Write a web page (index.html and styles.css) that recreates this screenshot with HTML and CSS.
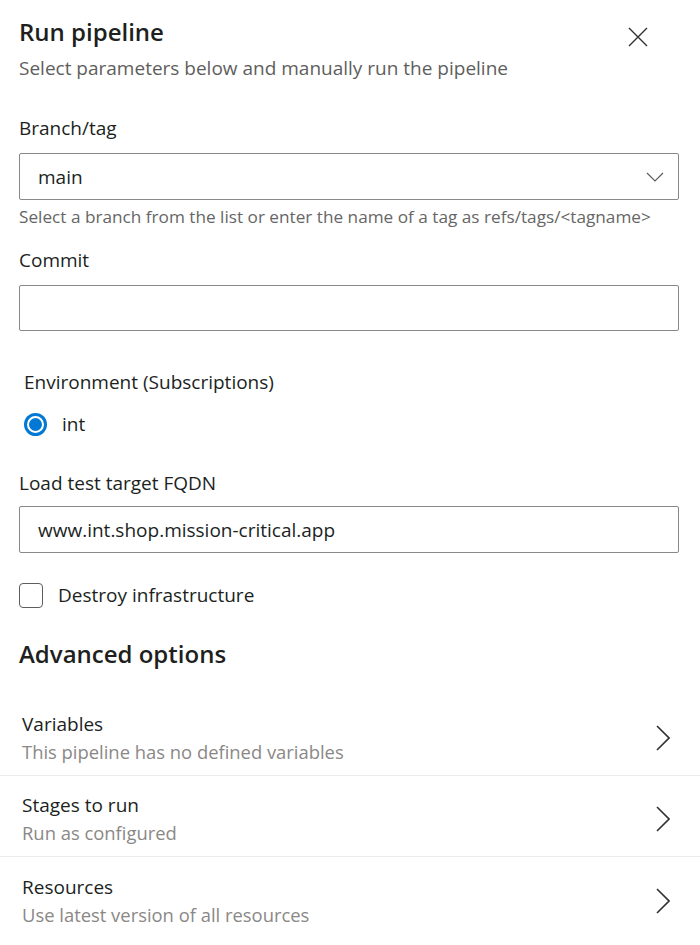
FILE: index.html
```html
<!DOCTYPE html>
<html>
<head>
<meta charset="utf-8">
<link rel="stylesheet" href="styles.css">
</head>
<body>
<div class="panel">
  <header class="head">
    <div class="head-text">
      <h1 class="title">Run pipeline</h1>
      <p class="subtitle">Select parameters below and manually run the pipeline</p>
    </div>
    <button class="close" aria-label="Close">
      <svg width="20" height="20" viewBox="0 0 20 20"><path d="M1 1 L19 19 M19 1 L1 19" stroke="#323130" stroke-width="1.4" fill="none"/></svg>
    </button>
  </header>

  <section class="form">
    <div class="field branch">
      <label class="label">Branch/tag</label>
      <div class="input select">
        <span class="value">main</span>
        <svg class="chev-down" width="18" height="10" viewBox="0 0 18 10"><path d="M1 1 L9 9 L17 1" stroke="#605e5c" stroke-width="1.2" fill="none"/></svg>
      </div>
      <p class="help">Select a branch from the list or enter the name of a tag as refs/tags/&lt;tagname&gt;</p>
    </div>

    <div class="field commit">
      <label class="label">Commit</label>
      <div class="input"></div>
    </div>

    <div class="field env">
      <label class="label">Environment (Subscriptions)</label>
      <div class="radio-row">
        <span class="radio"></span>
        <span class="radio-text">int</span>
      </div>
    </div>

    <div class="field fqdn">
      <label class="label">Load test target FQDN</label>
      <div class="input"><span class="value value-fqdn">www.int.shop.mission-critical.app</span></div>
    </div>

    <div class="check-row">
      <span class="checkbox"></span>
      <span class="check-text">Destroy infrastructure</span>
    </div>

    <h2 class="adv">Advanced options</h2>
  </section>

  <ul class="list">
    <li class="item">
      <div class="item-text">
        <div class="item-title">Variables</div>
        <div class="item-sub">This pipeline has no defined variables</div>
      </div>
      <svg class="chev" width="14" height="26" viewBox="0 0 14 26"><path d="M1 1 L13 13 L1 25" stroke="#323130" stroke-width="1.6" fill="none"/></svg>
    </li>
    <li class="item">
      <div class="item-text">
        <div class="item-title">Stages to run</div>
        <div class="item-sub">Run as configured</div>
      </div>
      <svg class="chev" width="14" height="26" viewBox="0 0 14 26"><path d="M1 1 L13 13 L1 25" stroke="#323130" stroke-width="1.6" fill="none"/></svg>
    </li>
    <li class="item">
      <div class="item-text">
        <div class="item-title">Resources</div>
        <div class="item-sub">Use latest version of all resources</div>
      </div>
      <svg class="chev" width="14" height="26" viewBox="0 0 14 26"><path d="M1 1 L13 13 L1 25" stroke="#323130" stroke-width="1.6" fill="none"/></svg>
    </li>
  </ul>
</div>
</body>
</html>
```

FILE: styles.css
```css
* { box-sizing: border-box; }
html, body { margin: 0; padding: 0; background: #ffffff; }
body {
  font-family: "Open Sans", "Noto Sans", sans-serif;
  color: #201f1e;
  width: 700px;
  height: 945px;
  overflow: hidden;
}
.panel { display: flex; flex-direction: column; }

.head {
  display: flex;
  justify-content: space-between;
  align-items: flex-start;
  padding: 15px 20px 0 19px;
}
.title {
  margin: 0;
  font-size: 24px;
  font-weight: 600;
  line-height: 34px;
  color: #201f1e;
}
.subtitle {
  margin: 6px 0 0;
  font-size: 19px;
  line-height: 26px;
  color: #605e5c;
}
.close {
  border: 0;
  background: none;
  padding: 0;
  margin: 12px 32px 0 0;
  width: 20px;
  height: 20px;
  display: flex;
}

.form { padding: 0 21px 0 19px; display: flex; flex-direction: column; }
.field { display: flex; flex-direction: column; }
.label {
  font-size: 19px;
  line-height: 26px;
  color: #201f1e;
  margin-top: 33px;
  margin-bottom: 12px;
}
.branch .label { margin-top: 34px; }
.input {
  height: 47px;
  border: 1px solid #8a8886;
  border-radius: 2px;
  display: flex;
  align-items: center;
  padding: 0 18px;
}
.select { justify-content: space-between; padding-right: 14px; }
.value { font-size: 19px; color: #201f1e; }
.help {
  margin: 6px 0 0;
  font-size: 17.2px;
  line-height: 22px;
  color: #666666;
}
.commit .label { margin-top: 19px; }
.commit .input { height: 46px; }

.env .label { margin-left: 5px; margin-top: 38px; margin-bottom: 16px; }
.radio-row { display: flex; align-items: center; gap: 15px; padding-left: 5px; }
.radio {
  width: 23px; height: 23px;
  border-radius: 50%;
  background: #0078d4;
  position: relative;
  display: inline-block;
}
.radio::after {
  content: "";
  position: absolute;
  left: 3px; top: 3px;
  width: 17px; height: 17px;
  border-radius: 50%;
  border: 2px solid #ffffff;
  box-sizing: border-box;
}
.radio-text { font-size: 19px; color: #201f1e; }

.fqdn .label { margin-top: 33px; margin-bottom: 10px; }
.check-row { display: flex; align-items: center; gap: 15px; margin-top: 29px; }
.checkbox {
  width: 24px; height: 25px;
  border: 1px solid #605e5c;
  border-radius: 4px;
  display: inline-block;
}
.check-text { font-size: 19px; color: #201f1e; }

.adv {
  margin: 29px 0 0;
  font-size: 24px;
  font-weight: 600;
  line-height: 34px;
  color: #201f1e;
}

.list { list-style: none; margin: 24px 0 0; padding: 0; }
.item {
  display: flex;
  justify-content: space-between;
  align-items: center;
  padding: 10px 30px 4px 22px;
  border-bottom: 1px solid #edebe9;
  height: 81px;
}
.item:last-child { border-bottom: 0; }
.item-title { font-size: 19px; line-height: 27px; color: #201f1e; }
.item-sub { font-size: 18.4px; line-height: 27px; color: #8a8886; }
.chev { display: block; }
```
